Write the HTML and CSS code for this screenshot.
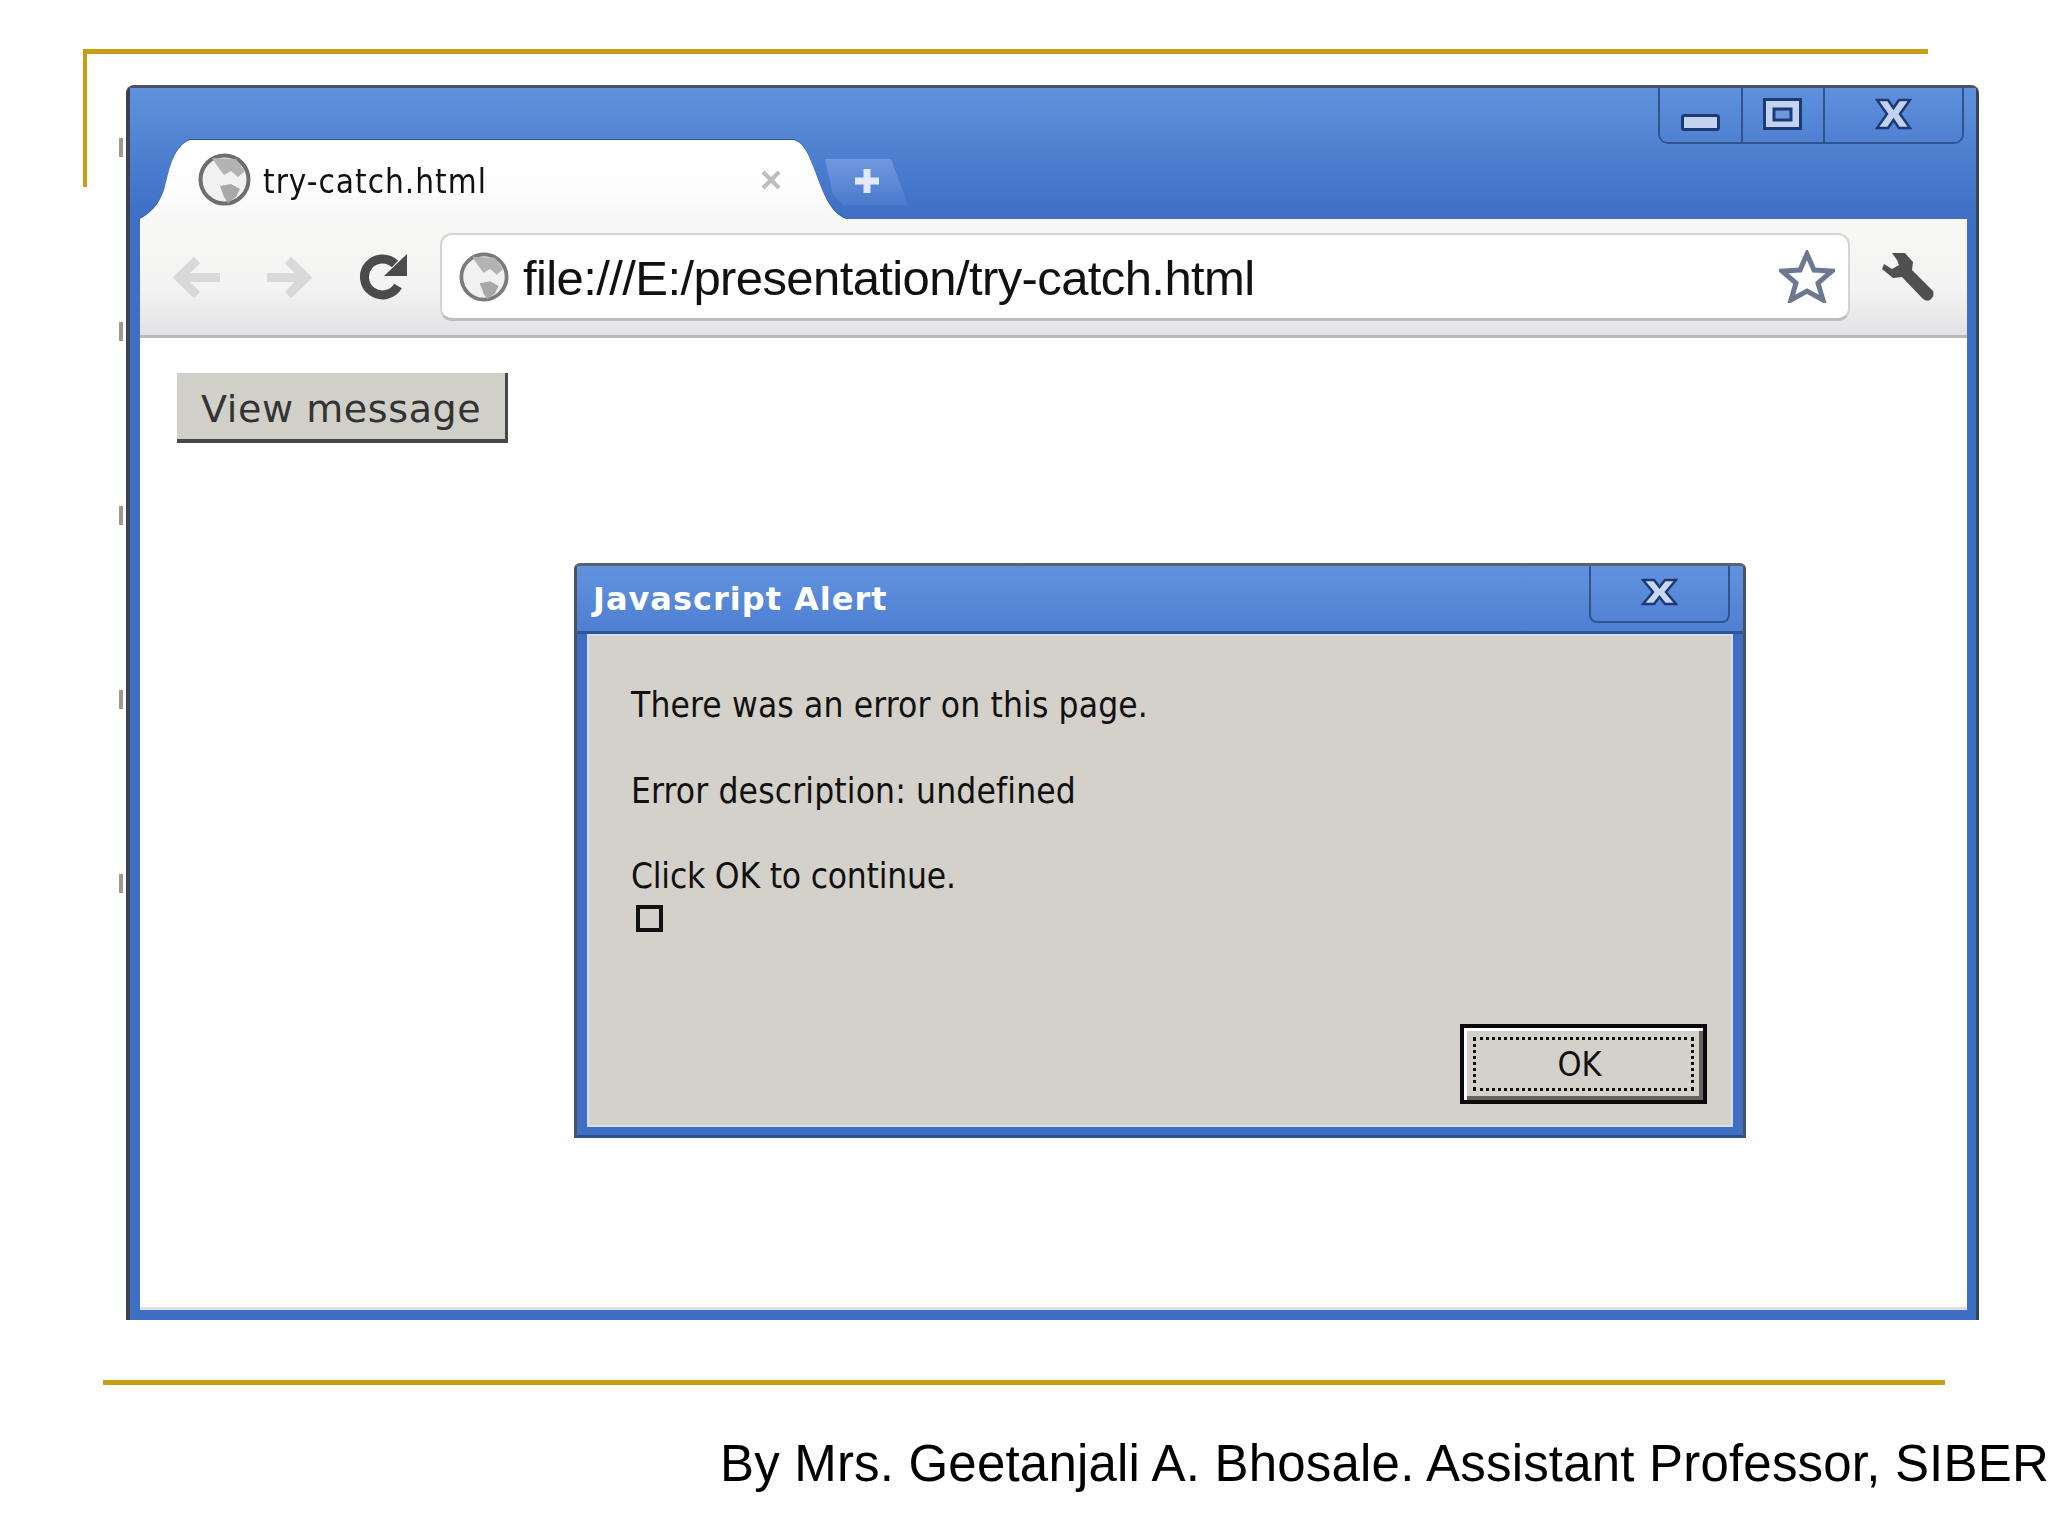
FILE: index.html
```html
<!DOCTYPE html>
<html lang="en">
<head>
    <meta charset="UTF-8">
    <title>try-catch.html</title>
    <link rel="stylesheet" href="styles.css">
</head>
<body>
    <div class="slide">
        <div class="gold-corner"></div>

        <div class="stage">
            <div class="ticks">
                <span></span><span></span><span></span><span></span><span></span>
            </div>

            <div class="browser">
                <div class="titlebar">
                    <div class="tab-wrap">
                        <div class="tab">
                            <svg class="globe" viewBox="0 0 53 53">
                                <circle cx="26.5" cy="26.5" r="24" fill="#f1f1f1" stroke="#6e6e6e" stroke-width="4"/>
                                <path d="M14 5 L38 6 L47 18 L40 24 L33 18 L26 22 L20 14 Z" fill="#b3b3b3"/>
                                <path d="M22 33 L33 31 L42 36 L38 44 L30 50 L26 44 Z" fill="#a8a8a8"/>
                            </svg>
                            <span class="tab-title">try-catch.html</span>
                            <svg class="tab-close" viewBox="0 0 22 22">
                                <path d="M3 3 L19 19 M19 3 L3 19" stroke="#bdbdbd" stroke-width="4"/>
                            </svg>
                        </div>
                    </div>
                    <div class="new-tab">
                        <svg class="plus" viewBox="0 0 28 28">
                            <path d="M14 2 V26 M2 14 H26" stroke="#e2eafa" stroke-width="7"/>
                        </svg>
                    </div>
                    <div class="win-buttons">
                        <div class="win-btn btn-min">
                            <svg viewBox="0 0 39 17" class="icon-min">
                                <rect x="1.5" y="1.5" width="36" height="14" rx="2" fill="#c3d2f0" stroke="#1d3a75" stroke-width="3"/>
                            </svg>
                        </div>
                        <div class="win-btn btn-max">
                            <svg viewBox="0 0 39 32" class="icon-max">
                                <rect x="1.5" y="1.5" width="36" height="29" fill="#c3d2f0" stroke="#1d3a75" stroke-width="3"/>
                                <rect x="11" y="11" width="17" height="11" fill="#6d97dc" stroke="#1d3a75" stroke-width="3"/>
                            </svg>
                        </div>
                        <div class="win-btn btn-close">
                            <svg viewBox="0 0 37 32" class="icon-x">
                                <path d="M2 2 H13 L18.500 10 L24 2 H35 L25 16 L35 30 H24 L18.500 22 L13 30 H2 L12 16 Z" fill="#c3d2f0" stroke="#1d3a75" stroke-width="2.500"/>
                            </svg>
                        </div>
                    </div>
                </div>

                <div class="toolbar">
                    <svg class="icon-back" viewBox="0 0 47 43">
                        <path d="M47 21.500 H10 M24 4 L6 21.500 L24 39" fill="none" stroke="#d9d9d9" stroke-width="9"/>
                    </svg>
                    <svg class="icon-forward" viewBox="0 0 45 43">
                        <path d="M0 21.500 H37 M21 4 L39 21.500 L21 39" fill="none" stroke="#d9d9d9" stroke-width="9"/>
                    </svg>
                    <svg class="icon-reload" viewBox="0 0 50 48">
                        <path d="M41 33 A18 18 0 1 1 38 11" fill="none" stroke="#4b4b4b" stroke-width="9"/>
                        <path d="M50 1 V23 H27 Z" fill="#4b4b4b"/>
                    </svg>
                    <div class="address">
                        <svg class="globe-small" viewBox="0 0 53 53">
                            <circle cx="26.5" cy="26.5" r="24" fill="#f1f1f1" stroke="#7a7a7a" stroke-width="4"/>
                            <path d="M14 5 L38 6 L47 18 L40 24 L33 18 L26 22 L20 14 Z" fill="#b3b3b3"/>
                            <path d="M22 33 L33 31 L42 36 L38 44 L30 50 L26 44 Z" fill="#a8a8a8"/>
                        </svg>
                        <span class="url">file:///E:/presentation/try-catch.html</span>
                        <svg class="icon-star" viewBox="0 0 56 53">
                            <polygon points="28,4 35,20 53,21 39,33 44,50 28,41 12,50 17,33 3,21 21,20" fill="#fdfdff" stroke="#6d7890" stroke-width="5"/>
                        </svg>
                    </div>
                    <svg class="icon-wrench" viewBox="0 0 54 50">
                        <path d="M11 1 L24 1 L32 10 L31 18 L52 39 Q54 44 49 48 Q45 50 41 46 L21 25 L12 26 L1 17 L3 12 L11 17 L18 13 L16 8 Z" fill="#505050"/>
                    </svg>
                </div>

                <div class="page">
                    <button class="view-btn">View message</button>

                    <div class="dialog">
                        <div class="dialog-title">
                            <span class="dialog-name">Javascript Alert</span>
                            <div class="dialog-close">
                                <svg viewBox="0 0 37 28" class="icon-x-small">
                                    <path d="M2 2 H13 L18.500 9 L24 2 H35 L25 14 L35 26 H24 L18.500 19 L13 26 H2 L12 14 Z" fill="#c9d6f0" stroke="#1d3a75" stroke-width="2.500"/>
                                </svg>
                            </div>
                        </div>
                        <div class="dialog-body">
                            <p class="msg">There was an error on this page.</p>
                            <p class="msg">Error description: undefined</p>
                            <p class="msg msg-tight">Click OK to continue.</p>
                            <div class="box-glyph"></div>
                            <div class="ok-row">
                                <div class="ok-btn">
                                    <div class="ok-focus">OK</div>
                                </div>
                            </div>
                        </div>
                    </div>
                </div>
            </div>
        </div>

        <div class="gold-line"></div>
        <div class="credit">By Mrs. Geetanjali A. Bhosale. Assistant Professor, SIBER</div>
    </div>
</body>
</html>
```

FILE: styles.css
```css
* {
    margin: 0;
    padding: 0;
    box-sizing: border-box;
}

body {
    background: #fff;
    font-family: "DejaVu Sans Condensed", "DejaVu Sans", sans-serif;
    color: #111;
}

.slide {
    width: 2048px;
    height: 1536px;
    overflow: hidden;
    padding-top: 49px;
}

.gold-corner {
    width: 1845px;
    height: 138px;
    margin-left: 83px;
    margin-bottom: -102px;
    border-top: 5px solid #c89e14;
    border-left: 4px solid #c89e14;
}

.stage {
    display: flex;
    margin-left: 119px;
}

.ticks {
    width: 4px;
    margin-right: 3px;
    padding-top: 53px;
    display: flex;
    flex-direction: column;
    gap: 165px;
}

.ticks span {
    display: block;
    height: 19px;
    background: #999;
}

/* browser window */
.browser {
    width: 1853px;
    height: 1235px;
    display: flex;
    flex-direction: column;
    background: #3e6fc4;
    border-top: 3px solid #4a5160;
    border-left: 4px solid #3c4350;
    border-right: 3px solid #3c4350;
    border-top-left-radius: 8px;
    border-top-right-radius: 8px;
    padding-bottom: 10px;
}

.titlebar {
    height: 131px;
    display: flex;
    padding-left: 10px;
    background: linear-gradient(#5f91dd 0%, #5a8bd8 20%, #4173c8 85%, #3f6fc4 100%);
}

.tab-wrap {
    align-self: flex-end;
    filter: drop-shadow(0 -1px 0 #2f5a9e);
}

.tab {
    width: 706px;
    height: 79px;
    display: flex;
    align-items: flex-start;
    padding: 13px 0 0 58px;
    background: linear-gradient(#fff 0%, #fdfdfd 60%, #f7f7f7 100%);
    clip-path: path("M0 79 C16 70 20 60 24 50 C28 36 32 6 50 0 L654 0 C668 4 672 26 684 54 C690 68 698 76 706 79 Z");
}

.globe {
    width: 53px;
    height: 53px;
    flex: none;
}

.tab-title {
    margin-left: 12px;
    margin-top: 7px;
    font-size: 33px;
    letter-spacing: 1px;
    line-height: 44px;
    color: #111;
}

.tab-close {
    width: 22px;
    height: 22px;
    margin-left: auto;
    margin-right: 64px;
    margin-top: 16px;
}

.new-tab {
    align-self: flex-end;
    width: 83px;
    height: 46px;
    margin-left: -21px;
    margin-bottom: 14px;
    display: flex;
    align-items: center;
    justify-content: center;
    background: linear-gradient(#7099e0, #4b79cc);
    clip-path: polygon(0 0, 66px 0, 83px 46px, 18px 46px, 8px 36px);
}

.plus {
    width: 28px;
    height: 28px;
    margin-bottom: 2px;
}

.win-buttons {
    width: 306px;
    height: 56px;
    margin-left: auto;
    margin-right: 12px;
    display: flex;
    border: 2px solid #2f558f;
    border-top: none;
    border-radius: 0 0 10px 10px;
}

.win-btn {
    display: flex;
    align-items: flex-start;
    justify-content: center;
    padding-top: 10px;
    background: linear-gradient(#5f91dd, #4f80d2);
}

.btn-min {
    width: 83px;
    border-right: 2px solid #2f558f;
    border-bottom-left-radius: 8px;
}

.btn-max {
    width: 82px;
    border-right: 2px solid #2f558f;
}

.btn-close {
    flex: 1;
    border-bottom-right-radius: 8px;
}

.icon-min {
    width: 39px;
    height: 17px;
    margin-top: 16px;
}

.icon-max {
    width: 39px;
    height: 32px;
    margin-right: 2px;
}

.icon-x {
    width: 37px;
    height: 32px;
}

/* toolbar */
.toolbar {
    height: 119px;
    margin: 0 9px 0 10px;
    padding-left: 33px;
    display: flex;
    align-items: center;
    background: linear-gradient(#f8f8f6 0%, #f3f3f3 60%, #e3e3e6 100%);
    border-bottom: 3px solid #b9b9bd;
}

.icon-back {
    width: 47px;
    height: 43px;
    flex: none;
}

.icon-forward {
    width: 45px;
    height: 43px;
    margin-left: 47px;
    flex: none;
}

.icon-reload {
    width: 50px;
    height: 48px;
    margin-left: 45px;
    flex: none;
}

.address {
    width: 1410px;
    height: 88px;
    margin-left: 33px;
    padding: 0 13px 0 17px;
    display: flex;
    align-items: center;
    background: #fff;
    border: 2px solid #d4d4d4;
    border-bottom: 3px solid #bdbdbd;
    border-radius: 12px;
    flex: none;
}

.globe-small {
    width: 50px;
    height: 50px;
    flex: none;
}

.url {
    margin-left: 14px;
    margin-top: 2px;
    font-family: "Liberation Sans", sans-serif;
    font-size: 49px;
    letter-spacing: -0.6px;
    color: #111;
}

.icon-star {
    width: 56px;
    height: 53px;
    margin-left: auto;
}

.icon-wrench {
    width: 54px;
    height: 50px;
    margin-left: 31px;
    flex: none;
}

/* page area */
.page {
    flex: 1;
    margin: 0 9px 0 10px;
    padding: 35px 37px;
    background: #fefefe;
    border-bottom: 3px solid #e2dde8;
}

.view-btn {
    display: block;
    width: 331px;
    height: 70px;
    padding: 5px 0 0 24px;
    font-family: "DejaVu Sans", sans-serif;
    font-size: 38px;
    letter-spacing: 0.6px;
    text-align: left;
    color: #333;
    background: #d0cfc8;
    border: none;
    border-right: 3px solid #48484a;
    border-bottom: 4px solid #48484a;
}

.dialog {
    width: 1172px;
    height: 575px;
    margin-top: 120px;
    margin-left: 397px;
    display: flex;
    flex-direction: column;
    background: #3e6fc4;
    border-top: 3px solid #5a6270;
    border-left: 3px solid #4a5160;
    border-right: 3px solid #4a5160;
    border-bottom: 3px solid #2f4f8a;
    border-radius: 6px 6px 0 0;
    padding: 0 10px 8px 10px;
}

.dialog-title {
    height: 68px;
    margin: 0 -10px;
    padding-left: 16px;
    display: flex;
    justify-content: space-between;
    color: #fff;
    background: linear-gradient(#6093de, #4f7fd2);
    border-bottom: 3px solid #2e5596;
}

.dialog-name {
    font-family: "DejaVu Sans", sans-serif;
    font-weight: bold;
    font-size: 32px;
    letter-spacing: 1px;
    line-height: 66px;
}

.dialog-close {
    width: 141px;
    height: 57px;
    margin-right: 13px;
    display: flex;
    align-items: center;
    justify-content: center;
    border: 2px solid #2f558f;
    border-top: none;
    border-radius: 0 0 8px 8px;
}

.icon-x-small {
    width: 37px;
    height: 28px;
    margin-bottom: 3px;
}

.dialog-body {
    flex: 1;
    display: flex;
    flex-direction: column;
    padding: 47px 24px 21px 42px;
    background: #d4d0ca;
    border: 2px solid #cfe0f2;
}

.msg {
    font-size: 35px;
    line-height: 44px;
    margin-bottom: 41.500px;
    letter-spacing: 0.15px;
    color: #111;
}

.msg-tight {
    margin-bottom: 0;
    letter-spacing: -0.2px;
}

.box-glyph {
    width: 27px;
    height: 27px;
    margin: 7px 0 0 5px;
    border: 4px solid #111;
}

.ok-row {
    margin-top: auto;
    display: flex;
    justify-content: flex-end;
}

.ok-btn {
    width: 247px;
    height: 80px;
    padding: 9px;
    background: #d4d0ca;
    border: 4px solid #0a0a0a;
    box-shadow: inset 3px 3px 0 #fff, inset -4px -4px 0 #66625c;
}

.ok-focus {
    height: 100%;
    display: flex;
    align-items: center;
    justify-content: center;
    padding-right: 8px;
    font-size: 34px;
    border: 3px dotted #111;
}

/* footer */
.gold-line {
    width: 1842px;
    height: 5px;
    margin: 60px 0 0 103px;
    background: #c89e14;
}

.credit {
    margin-top: 48px;
    padding-left: 720px;
    font-family: "Liberation Sans", sans-serif;
    font-size: 51px;
    letter-spacing: 0.19px;
    line-height: 62px;
    white-space: nowrap;
    color: #000;
}
```
